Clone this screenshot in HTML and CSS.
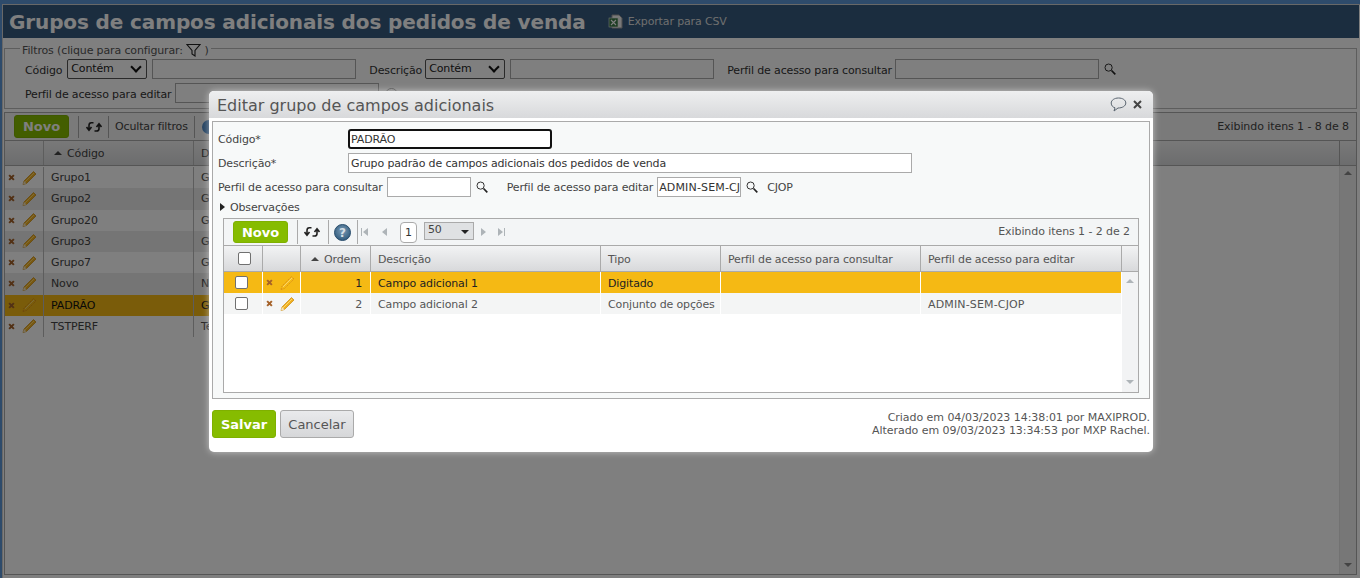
FILE: index.html
```html
<!DOCTYPE html>
<html lang="pt-BR">
<head>
<meta charset="utf-8">
<title>Grupos de campos adicionais dos pedidos de venda</title>
<link rel="stylesheet" href="styles.css">
</head>
<body>
<svg class="defs" width="0" height="0" aria-hidden="true">
  <defs>
    <radialGradient id="helpfill" cx=".5" cy=".4" r=".6">
      <stop offset="0" stop-color="#7d9db6"/>
      <stop offset="1" stop-color="#2f5a7d"/>
    </radialGradient>
  </defs>
  <symbol id="pencil" viewBox="0 0 16 16">
    <path d="M2 14.500 3 11 12.500 1.500 15 4 5.500 13.500Z" fill="#f0b020" stroke="#c98a10" stroke-width=".7"/>
    <path d="M2 14.500 3 11 5.500 13.500Z" fill="#f3e3c0"/>
    <path d="M4 12 13 3" stroke="#ffd76a" stroke-width="1"/>
  </symbol>
  <symbol id="pencil-faded" viewBox="0 0 16 16">
    <path d="M2 14.500 3 11 12.500 1.500 15 4 5.500 13.500Z" fill="none" stroke="#d98f18" stroke-width=".9" stroke-dasharray="1.600 .8"/>
    <path d="M4 12 13 3" stroke="#f7d47a" stroke-width=".9"/>
  </symbol>
  <symbol id="cross" viewBox="0 0 8 8">
    <path d="M1.300 1.300 6.700 6.700M6.700 1.300 1.300 6.700" stroke="#a5622a" stroke-width="2.300"/>
  </symbol>
  <symbol id="search" viewBox="0 0 12 12">
    <circle cx="4.600" cy="4.600" r="3.600" fill="none" stroke="#333" stroke-width="1"/>
    <path d="M7.500 7.500 11.300 11.300" stroke="#222" stroke-width="1.700"/>
  </symbol>
  <symbol id="refresh" viewBox="0 0 16 14">
    <path d="M7.500 2.800H5.400C3.800 2.800 3 3.800 3 5.400V10M.5 7 3 10.300 5.500 7" fill="none" stroke="#222" stroke-width="1.600"/>
    <path d="M8.500 11H10.600C12.200 11 13 10 13 8.400V4M10.500 7 13 3.700 15.500 7" fill="none" stroke="#222" stroke-width="1.600"/>
  </symbol>
</svg>

<div class="page">
  <header class="page-head">
    <h1 class="page-title">Grupos de campos adicionais dos pedidos de venda</h1>
    <span class="export">
      <svg class="xls" width="15" height="15" viewBox="0 0 15 15"><path d="M4 1h7l3 3v10H4Z" fill="#f2f2f2" stroke="#999"/><rect x="1" y="4" width="9" height="9" fill="#3b7a46" stroke="#dfe8df" stroke-width=".6"/><path d="M3 6 8 11M8 6 3 11" stroke="#fff" stroke-width="1.100"/></svg>
      Exportar para CSV
    </span>
  </header>

  <fieldset class="filters">
    <legend class="filters-legend">Filtros (clique para configurar:
      <svg width="15" height="14" viewBox="0 0 15 14"><path d="M1 1.500h13L9 7.500V13L6 11V7.500Z" fill="none" stroke="#222" stroke-width="1.100"/></svg>
      )</legend>
    <div class="filter-row">
      <label class="filter-label">Código</label>
      <span class="fake-select">Contém</span>
      <span class="fake-input wide"></span>
      <label class="filter-label gap-l">Descrição</label>
      <span class="fake-select">Contém</span>
      <span class="fake-input wide"></span>
      <label class="filter-label gap-l">Perfil de acesso para consultar</label>
      <span class="fake-input wide"></span>
      <svg class="filter-search" width="12" height="12"><use href="#search"/></svg>
    </div>
    <div class="filter-row second">
      <label class="filter-label tight">Perfil de acesso para editar</label>
      <span class="fake-input wide"></span>
      <i class="radio"></i>
    </div>
  </fieldset>

  <section class="bg-grid">
    <div class="bg-toolbar">
      <span class="btn-green bg-novo">Novo</span>
      <span class="tool-sep"></span>
      <svg class="tool-icon" width="16" height="14"><use href="#refresh"/></svg>
      <span class="tool-sep"></span>
      <span class="tool-text">Ocultar filtros</span>
      <span class="tool-sep"></span>
      <span class="globe"></span>
      <span class="spacer"></span>
      <span class="count">Exibindo itens 1 - 8 de 8</span>
    </div>
    <div class="bg-row bg-head">
      <span class="bg-act"></span>
      <span class="bg-code"><i class="sort-up"></i>Código</span>
      <span class="bg-desc">D</span>
      <span class="spacer"></span>
      <span class="bg-head-end"></span>
    </div>
    <div class="bg-body">
      <div class="bg-rows">
        <div class="bg-row"><span class="bg-act"><svg width="7" height="7"><use href="#cross"/></svg><svg width="16" height="16"><use href="#pencil"/></svg></span><span class="bg-code">Grupo1</span><span class="bg-desc">G</span></div>
        <div class="bg-row alt"><span class="bg-act"><svg width="7" height="7"><use href="#cross"/></svg><svg width="16" height="16"><use href="#pencil"/></svg></span><span class="bg-code">Grupo2</span><span class="bg-desc">G</span></div>
        <div class="bg-row"><span class="bg-act"><svg width="7" height="7"><use href="#cross"/></svg><svg width="16" height="16"><use href="#pencil"/></svg></span><span class="bg-code">Grupo20</span><span class="bg-desc">G</span></div>
        <div class="bg-row alt"><span class="bg-act"><svg width="7" height="7"><use href="#cross"/></svg><svg width="16" height="16"><use href="#pencil"/></svg></span><span class="bg-code">Grupo3</span><span class="bg-desc">G</span></div>
        <div class="bg-row"><span class="bg-act"><svg width="7" height="7"><use href="#cross"/></svg><svg width="16" height="16"><use href="#pencil"/></svg></span><span class="bg-code">Grupo7</span><span class="bg-desc">G</span></div>
        <div class="bg-row alt"><span class="bg-act"><svg width="7" height="7"><use href="#cross"/></svg><svg width="16" height="16"><use href="#pencil"/></svg></span><span class="bg-code">Novo</span><span class="bg-desc">N</span></div>
        <div class="bg-row selected"><span class="bg-act"><svg width="7" height="7"><use href="#cross"/></svg><svg width="16" height="16"><use href="#pencil-faded"/></svg></span><span class="bg-code">PADRÃO</span><span class="bg-desc">G</span></div>
        <div class="bg-row"><span class="bg-act"><svg width="7" height="7"><use href="#cross"/></svg><svg width="16" height="16"><use href="#pencil"/></svg></span><span class="bg-code">TSTPERF</span><span class="bg-desc">Te</span></div>
      </div>
      <div class="bg-scroll"><i class="sc-up"></i><i class="sc-down"></i></div>
    </div>
  </section>
</div>

<div class="overlay"></div>

<div class="modal" role="dialog">
  <div class="modal-title">
    <span class="modal-title-text">Editar grupo de campos adicionais</span>
    <svg class="bubble" width="17" height="15" viewBox="0 0 17 15"><path d="M8.500 1C4.400 1 1.200 3.200 1.200 6s2 4.400 3.800 4.800L4 14l4-3c4.400 0 7.800-2 7.800-5S12.600 1 8.500 1Z" fill="none" stroke="#5a6570"/></svg>
    <svg class="close" width="9" height="9" viewBox="0 0 9 9"><path d="M1 1 8 8M8 1 1 8" stroke="#444" stroke-width="2"/></svg>
  </div>

  <div class="panel">
    <div class="form-row row-code">
      <label class="form-label">Código*</label>
      <span class="text-input focused">PADRÃO</span>
    </div>
    <div class="form-row row-desc">
      <label class="form-label">Descrição*</label>
      <span class="text-input long">Grupo padrão de campos adicionais dos pedidos de venda</span>
    </div>
    <div class="form-row row-perfil">
      <label class="plain-label">Perfil de acesso para consultar</label>
      <span class="text-input short"></span>
      <svg class="icon-search" width="12" height="12"><use href="#search"/></svg>
      <label class="plain-label edit-label">Perfil de acesso para editar</label>
      <span class="text-input short clipped">ADMIN-SEM-CJOP</span>
      <svg class="icon-search" width="12" height="12"><use href="#search"/></svg>
      <span class="plain-label code-note">CJOP</span>
    </div>
    <div class="form-row row-obs">
      <i class="tri-right"></i>
      <span class="plain-label">Observações</span>
    </div>

    <div class="grid">
      <div class="grid-toolbar">
        <span class="btn-green novo">Novo</span>
        <span class="tool-sep"></span>
        <svg class="tool-icon refresh-in" width="16" height="14"><use href="#refresh"/></svg>
        <span class="tool-sep"></span>
        <svg class="help" width="17" height="17" viewBox="0 0 17 17"><circle cx="8.500" cy="8.500" r="8" fill="url(#helpfill)" stroke="#2b4f6e"/><text x="8.500" y="12.500" class="help-mark">?</text></svg>
        <span class="tool-sep"></span>
        <span class="pager-icons lead"><i class="pg first"></i><i class="pg prev"></i></span>
        <span class="page-num">1</span>
        <span class="page-size">50<i class="caret"></i></span>
        <span class="pager-icons"><i class="pg next"></i><i class="pg last"></i></span>
        <span class="spacer"></span>
        <span class="count">Exibindo itens 1 - 2 de 2</span>
      </div>
      <div class="grid-row grid-head">
        <span class="cell c-check"><i class="check"></i></span>
        <span class="cell"></span>
        <span class="cell"><i class="sort-up"></i>Ordem</span>
        <span class="cell">Descrição</span>
        <span class="cell">Tipo</span>
        <span class="cell">Perfil de acesso para consultar</span>
        <span class="cell">Perfil de acesso para editar</span>
        <span class="cell c-last"></span>
      </div>
      <div class="grid-body">
        <div class="rows">
          <div class="grid-row data selected">
            <span class="cell c-check"><i class="check"></i></span>
            <span class="cell c-act"><svg width="7" height="7"><use href="#cross"/></svg><svg width="16" height="16"><use href="#pencil-faded"/></svg></span>
            <span class="cell c-num">1</span>
            <span class="cell">Campo adicional 1</span>
            <span class="cell">Digitado</span>
            <span class="cell"></span>
            <span class="cell"></span>
          </div>
          <div class="grid-row data">
            <span class="cell c-check"><i class="check"></i></span>
            <span class="cell c-act"><svg width="7" height="7"><use href="#cross"/></svg><svg width="16" height="16"><use href="#pencil"/></svg></span>
            <span class="cell c-num">2</span>
            <span class="cell">Campo adicional 2</span>
            <span class="cell">Conjunto de opções</span>
            <span class="cell"></span>
            <span class="cell caps">ADMIN-SEM-CJOP</span>
          </div>
        </div>
        <div class="scroll"><i class="sc-up"></i><i class="sc-down"></i></div>
      </div>
    </div>
  </div>

  <div class="modal-foot">
    <span class="btn-green save">Salvar</span>
    <span class="btn-cancel">Cancelar</span>
    <span class="spacer"></span>
    <div class="audit">Criado em 04/03/2023 14:38:01 por MAXIPROD.<br>Alterado em 09/03/2023 13:34:53 por MXP Rachel.</div>
  </div>
</div>
</body>
</html>
```
FILE: styles.css
```css
* { box-sizing: border-box; }
html, body { margin: 0; height: 100%; }
body {
  background: #fff;
  font: 11px/14px "DejaVu Sans", Verdana, sans-serif;
  letter-spacing: -.14px;
  color: #444;
  overflow: hidden;
  position: relative;
  width: 1360px;
  height: 578px;
}
.defs { position: absolute; }
.spacer { flex: 1; }

.page { height: 578px; background: #fff; border-top: 4px solid #5c96d6; border-left: 2px solid #5c96d6; display: flex; flex-direction: column; padding: 1px 0 0 1px; box-shadow: inset 1px 1px 0 #d0d0d0; }
.page-head { height: 33px; flex: none; background: #365a7e; display: flex; align-items: center; padding-left: 6px; margin-right: 1px; }
.page-title { margin: 0; font: bold 20px/30px "DejaVu Sans", Verdana, sans-serif; letter-spacing: -.12px; color: #fff; white-space: nowrap; }
.export { display: flex; align-items: center; gap: 5px; margin-left: 22px; color: #ddd; }

.filters { flex: none; margin: 1px 0 0 1px; padding: 1px 0 0; border: 1px solid #bbb; height: 70px; width: 1353px; }
.filters-legend { padding: 4px 2px 0; margin-left: 15px; color: #555; line-height: 14px; }
.filters-legend svg { vertical-align: -3px; height: 14px; }
.filter-row { display: flex; align-items: center; gap: 5px; padding-left: 20px; height: 20px; }
.filter-row.second { margin-top: 4px; }
.filter-label { color: #333; white-space: nowrap; padding-top: 3px; }
.filter-label.gap-l { margin: 0 -2px 0 8px; }
.filter-label.tight { margin-right: -1px; }
.filter-search { flex: none; }
.fake-select { width: 80px; height: 20px; border: 1px solid #555; border-radius: 2px; background: #fff; padding: 2px 3px 0; color: #222; position: relative; }
.fake-select::after { content: ""; position: absolute; right: 6px; top: 3px; width: 6px; height: 6px; border: solid #111; border-width: 0 2px 2px 0; transform: rotate(45deg); }
.fake-input { height: 20px; border: 1px solid #aaa; background: #fff; }
.fake-input.wide { width: 204px; }
.radio { width: 13px; height: 13px; border: 1px solid #999; border-radius: 50%; background: #fff; margin: 2px 0 0 1px; }

.bg-grid { flex: 1; min-height: 0; margin: 3px 0 3px 1px; width: 1353px; border: 1px solid #aaa; display: flex; flex-direction: column; }
.bg-toolbar { display: flex; align-items: center; height: 27px; flex: none; background: #f4f4f4; padding-left: 9px; }
.tool-sep { width: 1px; height: 22px; background: #aaa; margin: 0 9px; }
.tool-icon { flex: none; margin: 0 -3px 0 -2px; }
.tool-text { color: #444; margin: 0 -3px; white-space: nowrap; }
.globe { width: 14px; height: 14px; border-radius: 50%; background: #4a86c5; margin-left: -2px; }
.count { color: #444; padding-right: 7px; white-space: nowrap; letter-spacing: -.08px; }
.btn-green { display: flex; align-items: center; justify-content: center; background: #86bc00; color: #fff; font-weight: bold; border-radius: 3px; border: 1px solid #7fb000; letter-spacing: 0; padding-top: 1px; }
.bg-novo { width: 55px; height: 23px; font-size: 13px; }
.sort-up { display: inline-block; flex: none; width: 0; height: 0; border: 4px solid transparent; border-top: 0; border-bottom: 4px solid #444; margin: 0 5px 1px 0; }

.bg-body { flex: 1; display: flex; min-height: 0; }
.bg-rows { flex: 1; padding-top: 1px; }
.bg-scroll { width: 17px; background: #eee; border-left: 1px solid #e4e4e4; display: flex; flex-direction: column; justify-content: space-between; align-items: center; padding: 5px 0 7px; }
.bg-scroll i { border-bottom-color: #888; border-top-color: #888; }
.bg-row { display: flex; width: 600px; height: 21.25px; align-items: center; color: #444; background: #fff; }
.bg-row.alt { background: #eaeaea; }
.bg-row.selected { background: #f5b914; color: #111; }
.bg-head { width: auto; height: 26px; flex: none; background: linear-gradient(#f2f2f2, #d9dadc); border-top: 1px solid #aaa; border-bottom: 1px solid #aaa; }
.bg-head-end { width: 17px; height: 100%; border-left: 1px solid #aaa; }
.bg-act { width: 39px; height: 100%; display: flex; align-items: center; gap: 6px; padding-left: 3px; border-right: 1px solid #bbb; }
.bg-code { width: 150px; height: 100%; display: flex; align-items: center; padding: 1px 0 0 7px; border-right: 1px solid #bbb; }
.bg-head .bg-code { padding-left: 10px; }
.bg-desc { padding: 1px 0 0 7px; white-space: nowrap; }

.overlay { position: absolute; inset: 0; background: rgba(0, 0, 0, .5); }

.modal { position: absolute; left: 209px; top: 91px; width: 944px; height: 361px; background: #fff; border-radius: 5px; box-shadow: 0 0 7px rgba(255, 255, 255, .55); display: flex; flex-direction: column; padding: 0 3px; }
.modal-title { height: 27px; flex: none; margin: 0 -3px; padding: 2px 11px 0 8px; border-radius: 5px 5px 0 0; background: linear-gradient(#eeeff0, #d8d9db); display: flex; align-items: center; }
.modal-title-text { flex: 1; font-size: 16px; letter-spacing: 0; color: #555; white-space: nowrap; }
.bubble { margin: -3px 6px 0 0; }
.close { margin-top: -2px; }

.panel { margin-top: 3px; height: 278px; flex: none; border: 1px solid #aaa; background: #f7f9f9; padding: 0 10px 0 5px; }
.form-row { display: flex; align-items: center; color: #444; }
.row-code { height: 20px; margin-top: 7px; }
.row-desc { height: 20px; margin-top: 4px; }
.row-perfil { height: 20px; margin-top: 4px; }
.row-obs { height: 14px; margin-top: 3px; padding-left: 2px; }
.form-label { width: 130px; flex: none; padding-top: 2px; }
.plain-label { white-space: nowrap; color: #444; padding-top: 2px; }
.text-input { height: 20px; border: 1px solid #aaa; background: #fff; padding: 1px 2px 0; line-height: 18px; color: #333; white-space: nowrap; overflow: hidden; }
.text-input.focused { width: 204px; border: 2px solid #111; border-radius: 3px; padding: 1px 0 0 1px; line-height: 16px; }
.text-input.long { width: 564px; }
.text-input.short { width: 84px; margin-left: 4px; }
.text-input.clipped { padding: 1px 1px 0; letter-spacing: .15px; }
.icon-search { margin-left: 5px; flex: none; }
.edit-label { margin-left: 19px; }
.code-note { margin-left: 9px; }
.tri-right { width: 0; height: 0; border: 4px solid transparent; border-left: 5px solid #222; border-right: 0; margin-right: 5px; }

.grid { margin: 4px 0 0 5px; height: 175px; width: 916px; border: 1px solid #aaa; background: #fff; display: flex; flex-direction: column; }
.grid-toolbar { height: 26px; flex: none; display: flex; align-items: center; background: #f3f5f6; padding-left: 9px; }
.grid-toolbar .tool-sep { height: 24px; margin: 0 9px; }
.grid-toolbar .count { padding-right: 8px; color: #555; }
.refresh-in { margin: 0 -1px 0 -3px; }
.btn-green.novo { width: 55px; height: 22px; font-size: 13px; }
.help { flex: none; margin: 0 -3px 0 -4px; }
.help-mark { font: bold 12px "DejaVu Sans", sans-serif; fill: #d5dfe7; text-anchor: middle; }
.pager-icons { display: flex; gap: 12px; align-items: center; margin-right: 0; }
.pager-icons.lead { gap: 14px; margin: 0 13px 0 -4px; }
.pg { width: 0; height: 0; border: 4px solid transparent; position: relative; }
.pg.first, .pg.prev { border-left: 0; border-right: 5px solid #aeb4b8; }
.pg.next, .pg.last { border-right: 0; border-left: 5px solid #aeb4b8; }
.pg.first::before { content: ""; position: absolute; left: -2px; top: -4px; width: 1px; height: 8px; background: #aeb4b8; }
.pg.last::after { content: ""; position: absolute; left: 1px; top: -4px; width: 1px; height: 8px; background: #aeb4b8; }
.page-num { width: 17px; height: 21px; border: 1px solid #aaa; border-radius: 4px; background: #fff; display: flex; align-items: center; justify-content: center; margin-right: 7px; color: #333; padding-top: 2px; }
.page-size { width: 50px; height: 18px; border: 1px solid #aaa; background: #dfe1e3; padding-left: 3px; line-height: 14px; position: relative; margin: -3px 7px 0 0; color: #444; }
.caret { position: absolute; right: 4px; top: 7px; width: 0; height: 0; border: 4px solid transparent; border-bottom: 0; border-top: 4px solid #222; }

.grid-row { display: grid; grid-template-columns: 39px 38px 70px 230px 120px 200px 201px 16px; }
.cell { display: flex; align-items: center; padding: 2px 7px 0; border-right: 1px solid #c6c9cc; white-space: nowrap; color: #555; }
.cell.caps { letter-spacing: .15px; }
.grid-head { height: 27px; flex: none; background: linear-gradient(#f2f3f4, #d8d9db); border-top: 1px solid #aaa; border-bottom: 1px solid #aaa; }
.grid-head .cell { border-right-color: #aaa; }
.grid-head .cell:nth-child(3) { padding-left: 10px; }
.c-last { border-right: 0; }
.c-check { justify-content: center; padding: 0 0 0 3px; }
.data .c-check { padding: 0 3px 0 0; }
.check { display: block; width: 13px; height: 13px; border: 1px solid #707070; border-radius: 2px; background: #fff; }
.c-act { gap: 6px; padding: 0 0 0 3px; }
.c-num { justify-content: flex-end; padding-right: 8px; }
.grid-body { flex: 1; display: flex; min-height: 0; }
.rows { width: 898px; flex: none; }
.grid-row.data { height: 21px; grid-template-columns: 39px 38px 70px 230px 120px 200px 201px; background: #f4f5f5; }
.grid-row.data .cell { border-right-color: #fff; }
.grid-row.data.selected { background: #f5b914; }
.grid-row.data.selected .cell { color: #222; }
.scroll { flex: 1; background: #f2f3f4; display: flex; flex-direction: column; justify-content: space-between; align-items: center; padding: 7px 0 8px; }
.sc-up { width: 0; height: 0; border: 4px solid transparent; border-top: 0; border-bottom: 4px solid #aeb4b8; }
.sc-down { width: 0; height: 0; border: 4px solid transparent; border-bottom: 0; border-top: 4px solid #aeb4b8; }

.modal-foot { flex: 1; display: flex; align-items: center; padding-bottom: 4px; }
.btn-green.save { width: 64px; height: 28px; font-size: 13px; padding-top: 2px; }
.btn-cancel { width: 74px; height: 28px; margin-left: 4px; border: 1px solid #aaa; border-radius: 3px; background: linear-gradient(#e9eaec, #d6d7d9); display: flex; align-items: center; justify-content: center; font-size: 13px; letter-spacing: 0; color: #555; padding-top: 2px; }
.audit { text-align: right; color: #555; line-height: 13px; white-space: nowrap; letter-spacing: -.05px; }
```
